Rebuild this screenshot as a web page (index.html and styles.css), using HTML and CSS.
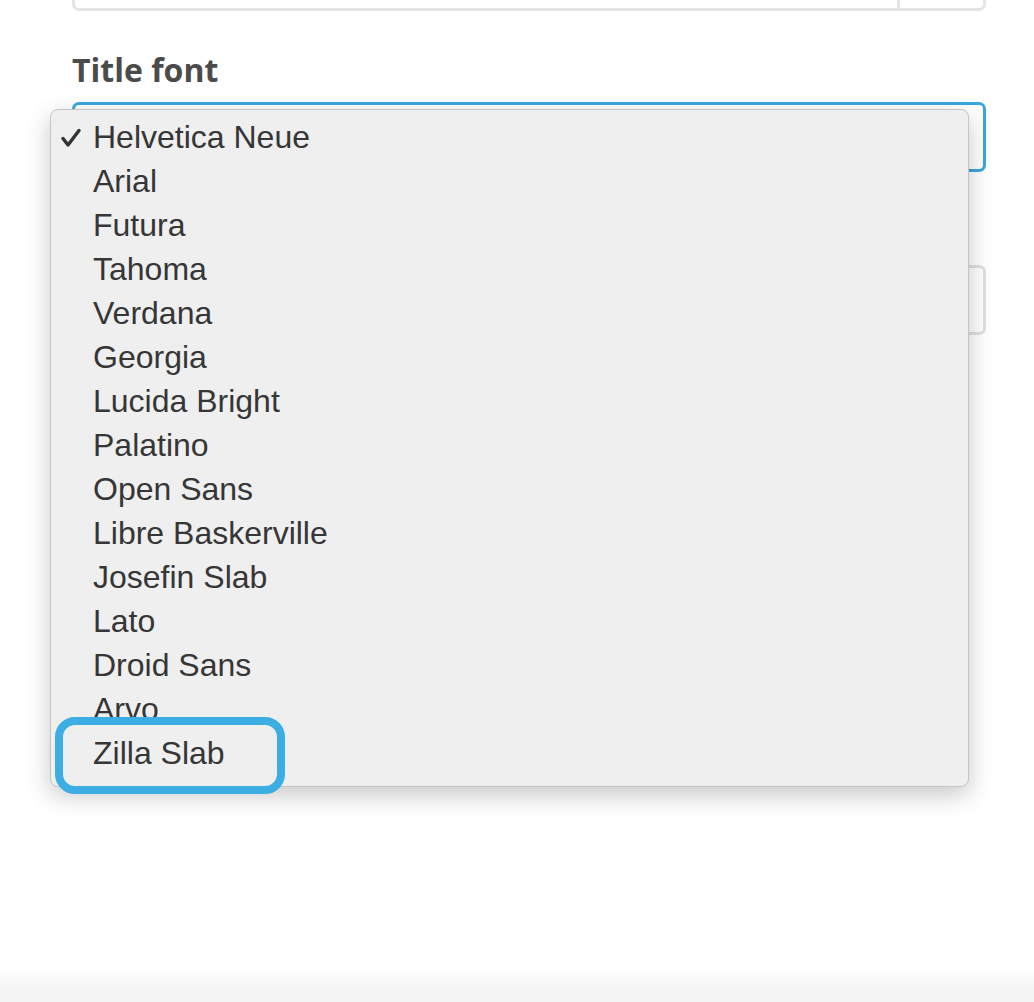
FILE: index.html
```html
<!DOCTYPE html>
<html lang="en">
<head>
    <meta charset="UTF-8">
    <meta name="viewport" content="width=device-width, initial-scale=1.0">
    <title>Theme settings</title>
    <link rel="stylesheet" href="styles.css">
</head>
<body>

    <div class="page">
        <div class="field input-group">
            <div class="input-main"></div>
            <div class="input-addon"></div>
        </div>

        <label class="field-label">Title font</label>

        <div class="select-wrap">
            <div class="select-box focused"></div>

            <!-- native select popup, open -->
            <ul class="menu">
                <li class="checked">
                    <svg class="check" width="20" height="20" viewBox="0 0 20 20">
                        <path d="M2 10.5 L7 17 L18 2.5" fill="none" stroke="#333" stroke-width="3.4" stroke-linecap="round" stroke-linejoin="round"/>
                    </svg>
                    Helvetica Neue
                </li>
                <li>Arial</li>
                <li>Futura</li>
                <li>Tahoma</li>
                <li>Verdana</li>
                <li>Georgia</li>
                <li>Lucida Bright</li>
                <li>Palatino</li>
                <li>Open Sans</li>
                <li>Libre Baskerville</li>
                <li>Josefin Slab</li>
                <li>Lato</li>
                <li>Droid Sans</li>
                <li>Arvo</li>
                <li>Zilla Slab</li>
                <div class="highlight"></div>
            </ul>
        </div>

        <div class="field next-field"></div>
    </div>

    <div class="footer-shade"></div>

</body>
</html>
```

FILE: styles.css
```css
html, body { margin: 0; padding: 0; }
body { background: #fff; font-family: "Open Sans", sans-serif; min-height: 100vh; display: flex; flex-direction: column; overflow: hidden; }
.page { width: 914px; margin-left: 72px; }

.field { box-sizing: border-box; border: 3px solid #e4e4e4; border-radius: 7px; height: 70px; }
.input-group { display: flex; height: 60px; margin-top: -49px; }
.input-main { flex: 1; }
.input-addon { width: 83px; border-left: 3px solid #e4e4e4; }

.field-label { display: block; font-size: 32px; font-weight: 700; line-height: 44px; color: #4b4b4b; margin-top: 37px; margin-bottom: 10px; }

.select-wrap { position: relative; }
.select-box { box-sizing: border-box; height: 70px; border: 3px solid #3aa6de; border-radius: 7px; }

.menu { position: absolute; left: -22px; top: 7px; width: 919px; box-sizing: border-box; margin: 0; padding: 5px 0 11px 0; list-style: none; background: #efefef; border: 1px solid #c4c4c4; border-radius: 8px; box-shadow: 0 8px 24px rgba(0, 0, 0, 0.22); font-family: "Liberation Sans", Arial, sans-serif; font-size: 32px; color: #363636; z-index: 2; }
.menu li { position: relative; height: 44px; line-height: 44px; padding-left: 42px; white-space: nowrap; }
.menu .check { position: absolute; left: 10px; top: 13px; }

.highlight { position: absolute; left: 4px; top: 607px; width: 230px; height: 77px; box-sizing: border-box; border: 8px solid #3daee3; border-radius: 20px; }

.next-field { margin-top: 93px; border-color: #e0e0e0; }

.footer-shade { margin-top: auto; height: 34px; background: linear-gradient(#ffffff, #f4f4f4 60%); }
```
